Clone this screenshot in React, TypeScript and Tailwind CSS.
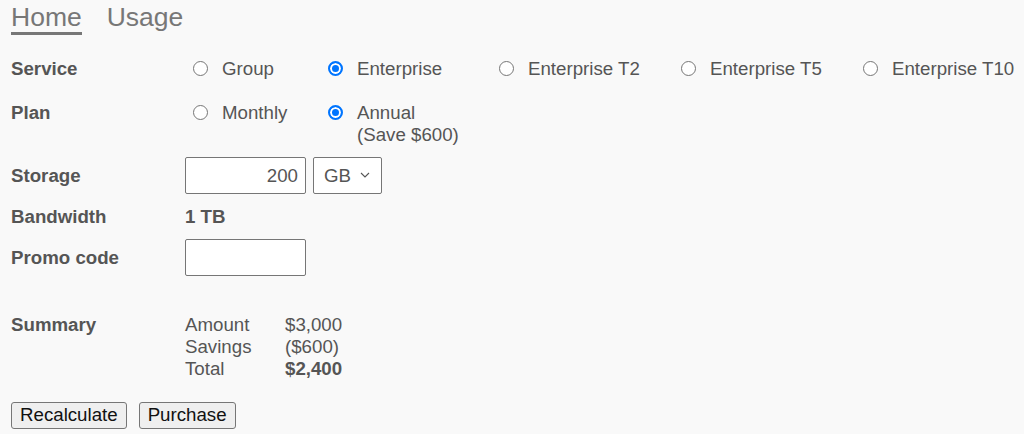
import { useState } from 'react'

const services = ['Group', 'Enterprise', 'Enterprise T2', 'Enterprise T5', 'Enterprise T10']
const colWidths = ['w-[135px]', 'w-[171px]', 'w-[182px]', 'w-[182px]', 'w-auto']

function Radio({
  name,
  checked,
  onChange,
  children,
  width,
}: {
  name: string
  checked: boolean
  onChange: () => void
  children: React.ReactNode
  width: string
}) {
  return (
    <label className={`flex items-start ${width} shrink-0`}>
      <input
        type="radio"
        name={name}
        checked={checked}
        onChange={onChange}
        className="appearance-none ml-[7.5px] mr-[14.5px] mt-[3px] w-[15px] h-[15px] shrink-0 rounded-full border border-[#767676] bg-white checked:border-[#0075ff] checked:border-[2px] checked:bg-[#0075ff] checked:shadow-[inset_0_0_0_2px_#fff]"
      />
      <span>{children}</span>
    </label>
  )
}

export default function App() {
  const [service, setService] = useState('Enterprise')
  const [plan, setPlan] = useState('Annual')
  const [storage, setStorage] = useState('200')
  const [promo, setPromo] = useState('')

  return (
    <div className="min-h-[434px] bg-[#f9f9f9] text-[#555] text-[18.7px] leading-[21.5px] font-['Liberation_Sans',Arial,sans-serif] px-[11px]">
      {/* tabs */}
      <div className="flex gap-[25px] text-[26.5px] leading-[29px] text-[#777] pt-[3px]">
        <span className="border-b-[3px] border-[#777]">Home</span>
        <span>Usage</span>
      </div>

      {/* service */}
      <div className="flex mt-[23px]">
        <div className="w-[174px] shrink-0 font-bold">Service</div>
        <div className="flex">
          {services.map((s, i) => (
            <Radio key={s} name="service" checked={service === s} onChange={() => setService(s)} width={colWidths[i]}>
              {s}
            </Radio>
          ))}
        </div>
      </div>

      {/* plan */}
      <div className="flex mt-[22.5px]">
        <div className="w-[174px] shrink-0 font-bold">Plan</div>
        <div className="flex">
          <Radio name="plan" checked={plan === 'Monthly'} onChange={() => setPlan('Monthly')} width="w-[135px]">
            Monthly
          </Radio>
          <Radio name="plan" checked={plan === 'Annual'} onChange={() => setPlan('Annual')} width="w-[171px]">
            Annual
            <br />
            (Save $600)
          </Radio>
        </div>
      </div>

      {/* storage */}
      <div className="flex items-center mt-[12px]">
        <div className="w-[174px] shrink-0 font-bold">Storage</div>
        <input
          value={storage}
          onChange={(e) => setStorage(e.target.value)}
          className="w-[121px] h-[37px] bg-white border border-[#767676] rounded-[2px] text-right pr-[7px] outline-none"
        />
        <div className="relative ml-[7px]">
          <select className="appearance-none w-[69px] h-[37px] bg-white border border-[#767676] rounded-[2px] pl-[10px] outline-none">
            <option>GB</option>
            <option>TB</option>
          </select>
          <svg
            className="absolute right-[12px] top-[15px] pointer-events-none"
            width="10"
            height="6"
            viewBox="0 0 10 6"
            fill="none"
            stroke="#555"
            strokeWidth="1.1"
          >
            <path d="M1 1l4 4 4-4" />
          </svg>
        </div>
      </div>

      {/* bandwidth */}
      <div className="flex mt-[12px]">
        <div className="w-[174px] shrink-0 font-bold">Bandwidth</div>
        <div className="font-bold">1 TB</div>
      </div>

      {/* promo */}
      <div className="flex items-center mt-[11.5px]">
        <div className="w-[174px] shrink-0 font-bold">Promo code</div>
        <input
          value={promo}
          onChange={(e) => setPromo(e.target.value)}
          className="w-[121px] h-[37px] bg-white border border-[#767676] rounded-[2px] px-[7px] outline-none"
        />
      </div>

      {/* summary */}
      <div className="flex mt-[38px] leading-[22px]">
        <div className="w-[174px] shrink-0 font-bold">Summary</div>
        <div className="grid grid-cols-[100px_auto]">
          <span>Amount</span>
          <span>$3,000</span>
          <span>Savings</span>
          <span>($600)</span>
          <span>Total</span>
          <span className="font-bold">$2,400</span>
        </div>
      </div>

      {/* actions */}
      <div className="flex gap-[12px] mt-[22px]">
        <button className="h-[27px] px-[8px] bg-[#efefef] border border-[#767676] rounded-[3px] text-[#111] leading-none">
          Recalculate
        </button>
        <button className="h-[27px] px-[8px] bg-[#efefef] border border-[#767676] rounded-[3px] text-[#111] leading-none">
          Purchase
        </button>
      </div>
    </div>
  )
}
